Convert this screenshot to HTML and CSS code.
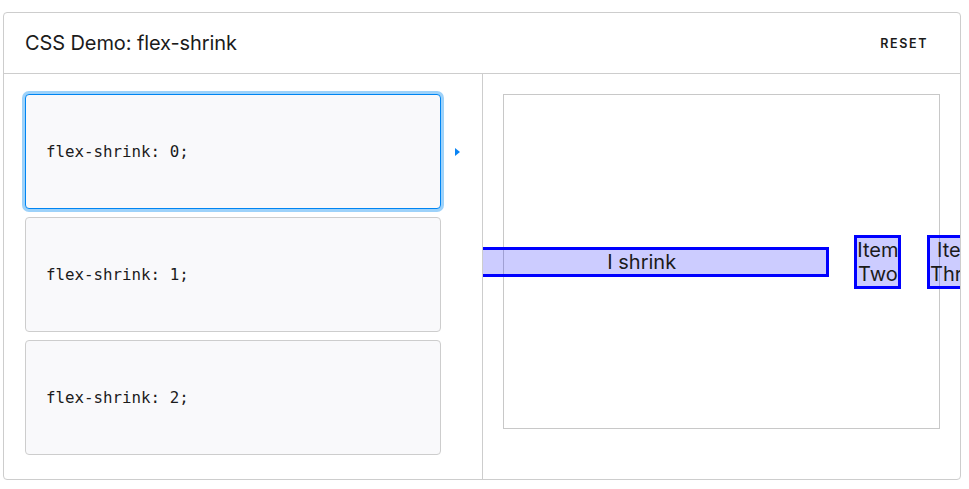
FILE: index.html
```html
<!DOCTYPE html>
<html lang="en">
<head>
<meta charset="utf-8">
<title>CSS Demo: flex-shrink</title>
<link rel="stylesheet" href="styles.css">
</head>
<body>
<div class="demo">
  <header class="demo-header">
    <h4 class="demo-title">CSS Demo: flex-shrink</h4>
    <button class="reset" type="button">Reset</button>
  </header>
  <div class="demo-body">
    <div class="choices">
      <div class="choice-row">
        <div class="choice selected"><code>flex-shrink: 0;</code></div>
        <span class="marker"></span>
      </div>
      <div class="choice-row">
        <div class="choice"><code>flex-shrink: 1;</code></div>
      </div>
      <div class="choice-row">
        <div class="choice"><code>flex-shrink: 2;</code></div>
      </div>
    </div>
    <div class="output">
      <section class="example">
        <div class="item item-main">I shrink</div>
        <div class="item">Item Two</div>
        <div class="item">Item Three</div>
      </section>
    </div>
  </div>
</div>
</body>
</html>
```
FILE: styles.css
```css
* { box-sizing: border-box; }
html, body { margin: 0; background: #fff; }
body {
  padding: 12px 8px 9px 3px;
  font-family: Inter, "Noto Sans", sans-serif;
  color: #1b1b1b;
}
.demo {
  width: 958px;
  height: 468px;
  border: 1px solid #cdcdcd;
  border-radius: 4px;
  display: flex;
  flex-direction: column;
  overflow: hidden;
}
.demo-header {
  height: 61px;
  flex: 0 0 61px;
  border-bottom: 1px solid #cdcdcd;
  display: flex;
  align-items: center;
  justify-content: space-between;
  padding: 0 21px 0 21px;
}
.demo-title {
  margin: 0;
  font-size: 20px;
  font-weight: 400;
  letter-spacing: -0.1px;
}
.reset {
  border: 0;
  background: transparent;
  font-family: Inter, "Noto Sans", sans-serif;
  font-size: 12.5px;
  font-weight: 600;
  letter-spacing: 1.6px;
  text-transform: uppercase;
  color: #1b1b1b;
  padding: 8px 11px 8px 12px;
}
.demo-body {
  flex: 1;
  display: flex;
  min-height: 0;
}
.choices {
  width: 479px;
  flex: 0 0 479px;
  border-right: 1px solid #cdcdcd;
  padding: 20px 0 0 21px;
  display: flex;
  flex-direction: column;
  gap: 8px;
}
.choice-row {
  display: flex;
  align-items: center;
  gap: 14px;
}
.choice {
  width: 416px;
  height: 115px;
  border: 1px solid #cdcdcd;
  border-radius: 4px;
  background: #f9f9fb;
  display: flex;
  align-items: center;
  padding-left: 20px;
}
.choice.selected {
  border-color: #0085f2;
  box-shadow: 0 0 0 3px #9dd2fa;
}
.choice code {
  font-family: "DejaVu Sans Mono", "Liberation Mono", monospace;
  font-size: 15.8px;
  color: #1b1b1b;
}
.marker {
  width: 0;
  height: 0;
  border-top: 4.5px solid transparent;
  border-bottom: 4.5px solid transparent;
  border-left: 5px solid #0a84f4;
}
.output {
  flex: 1;
  min-width: 0;
  padding: 20px 20px 50px 20px;
  overflow: hidden;
  display: flex;
}
.example {
  flex: 1;
  min-width: 0;
  border: 1px solid #c8c8c8;
  display: flex;
  align-items: center;
  justify-content: center;
}
.item {
  flex: 0 0 auto;
  width: min-content;
  margin: 0 12.8px;
  border: 3px solid blue;
  background: rgba(0, 0, 255, 0.2);
  font-size: 20px;
  line-height: 24px;
  text-align: center;
  color: #1b1b1b;
}
.item-main {
  width: 374px;
}
```
